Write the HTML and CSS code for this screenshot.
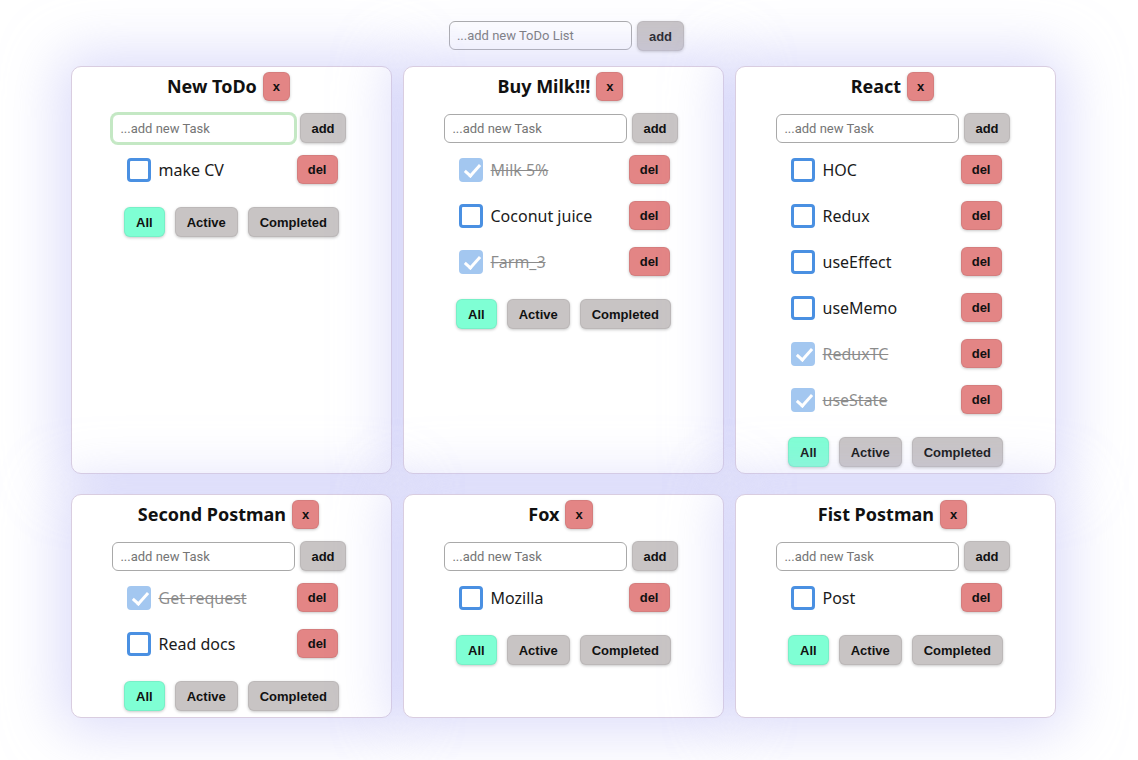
FILE: index.html
```html
<!DOCTYPE html>
<html lang="en">
<head>
<meta charset="utf-8">
<title>ToDo Lists</title>
<link rel="stylesheet" href="styles.css">
</head>
<body>
<div class="app">
  <div class="new-list">
    <input class="field" type="text" placeholder="...add new ToDo List">
    <button class="btn gray">add</button>
  </div>
  <div class="grid">
    <div class="card">
      <div class="title"><h3>New ToDo</h3><button class="btn red">x</button></div>
      <div class="add-row"><input class="field focused" type="text" placeholder="...add new Task"><button class="btn gray">add</button></div>
      <ul class="tasks">
        <li><label class="task"><span class="cb"></span><span class="name">make CV</span></label><button class="btn red">del</button></li>
      </ul>
      <div class="filters"><button class="btn all">All</button><button class="btn gray">Active</button><button class="btn gray">Completed</button></div>
    </div>
    <div class="card">
      <div class="title"><h3>Buy Milk!!!</h3><button class="btn red">x</button></div>
      <div class="add-row"><input class="field" type="text" placeholder="...add new Task"><button class="btn gray">add</button></div>
      <ul class="tasks">
        <li class="done"><label class="task"><span class="cb"></span><span class="name">Milk 5%</span></label><button class="btn red">del</button></li>
        <li><label class="task"><span class="cb"></span><span class="name">Coconut juice</span></label><button class="btn red">del</button></li>
        <li class="done"><label class="task"><span class="cb"></span><span class="name">Farm_3</span></label><button class="btn red">del</button></li>
      </ul>
      <div class="filters"><button class="btn all">All</button><button class="btn gray">Active</button><button class="btn gray">Completed</button></div>
    </div>
    <div class="card">
      <div class="title"><h3>React</h3><button class="btn red">x</button></div>
      <div class="add-row"><input class="field" type="text" placeholder="...add new Task"><button class="btn gray">add</button></div>
      <ul class="tasks">
        <li><label class="task"><span class="cb"></span><span class="name">HOC</span></label><button class="btn red">del</button></li>
        <li><label class="task"><span class="cb"></span><span class="name">Redux</span></label><button class="btn red">del</button></li>
        <li><label class="task"><span class="cb"></span><span class="name">useEffect</span></label><button class="btn red">del</button></li>
        <li><label class="task"><span class="cb"></span><span class="name">useMemo</span></label><button class="btn red">del</button></li>
        <li class="done"><label class="task"><span class="cb"></span><span class="name">ReduxTC</span></label><button class="btn red">del</button></li>
        <li class="done"><label class="task"><span class="cb"></span><span class="name">useState</span></label><button class="btn red">del</button></li>
      </ul>
      <div class="filters"><button class="btn all">All</button><button class="btn gray">Active</button><button class="btn gray">Completed</button></div>
    </div>
    <div class="card">
      <div class="title"><h3>Second Postman</h3><button class="btn red">x</button></div>
      <div class="add-row"><input class="field" type="text" placeholder="...add new Task"><button class="btn gray">add</button></div>
      <ul class="tasks">
        <li class="done"><label class="task"><span class="cb"></span><span class="name">Get request</span></label><button class="btn red">del</button></li>
        <li><label class="task"><span class="cb"></span><span class="name">Read docs</span></label><button class="btn red">del</button></li>
      </ul>
      <div class="filters"><button class="btn all">All</button><button class="btn gray">Active</button><button class="btn gray">Completed</button></div>
    </div>
    <div class="card">
      <div class="title"><h3>Fox</h3><button class="btn red">x</button></div>
      <div class="add-row"><input class="field" type="text" placeholder="...add new Task"><button class="btn gray">add</button></div>
      <ul class="tasks">
        <li><label class="task"><span class="cb"></span><span class="name">Mozilla</span></label><button class="btn red">del</button></li>
      </ul>
      <div class="filters"><button class="btn all">All</button><button class="btn gray">Active</button><button class="btn gray">Completed</button></div>
    </div>
    <div class="card">
      <div class="title"><h3>Fist Postman</h3><button class="btn red">x</button></div>
      <div class="add-row"><input class="field" type="text" placeholder="...add new Task"><button class="btn gray">add</button></div>
      <ul class="tasks">
        <li><label class="task"><span class="cb"></span><span class="name">Post</span></label><button class="btn red">del</button></li>
      </ul>
      <div class="filters"><button class="btn all">All</button><button class="btn gray">Active</button><button class="btn gray">Completed</button></div>
    </div>
  </div>
</div>
</body>
</html>
```
FILE: styles.css
```css
* { box-sizing: border-box; }

html {
  background: #ffffff;
  min-height: 100vh;
}

body {
  margin: 0;
  padding: 8px;
  min-height: 100vh;
  font-family: "Noto Sans", "Open Sans", sans-serif;
  color: #111;
}

.app {
  padding-top: 13px;
}

.new-list {
  display: flex;
  justify-content: center;
  gap: 5px;
  margin-left: -5px;
}

.field {
  width: 183px;
  height: 29px;
  border: 1px solid #a9a9a9;
  border-radius: 6px;
  padding: 0 7px;
  font-family: Roboto, "Liberation Sans", sans-serif;
  font-size: 13px;
  color: #222;
  background: #fff;
  outline: none;
}

.field::placeholder {
  color: #757575;
}

.field.focused {
  box-shadow: 0 0 0 2px #c4e8c4;
  border-color: #c4e8c4;
}

.btn {
  height: 30px;
  padding: 0 11px;
  border: 1px solid rgba(0, 0, 0, 0.06);
  border-radius: 6px;
  font-family: "Liberation Sans", Arial, sans-serif;
  font-weight: bold;
  font-size: 13px;
  color: #111;
  box-shadow: 0 1px 3px rgba(0, 0, 0, 0.22);
  cursor: pointer;
}

.gray { background: #c8c4c4; }
.red { background: #e38585; }
.all { background: #7fffd4; }

.grid {
  margin-top: 15px;
  margin-left: 63px;
  display: grid;
  grid-template-columns: repeat(3, 321px);
  column-gap: 11px;
  row-gap: 20px;
}

.card {
  background: #fff;
  border: 1px solid #d9cde0;
  border-radius: 10px;
  padding: 5px 10px 6px;
  box-shadow: 0 0 55px 12px rgba(196, 196, 246, 0.6);
}

.title {
  display: flex;
  justify-content: center;
  align-items: center;
  gap: 6px;
  margin-left: -6px;
}

.title h3 {
  margin: 0;
  font-size: 18px;
  font-weight: bold;
  line-height: 29px;
}

.title .btn {
  height: 29px;
  padding: 0 9px;
}

.add-row {
  display: flex;
  justify-content: center;
  align-items: center;
  gap: 5px;
  margin-top: 12px;
  margin-left: -5px;
}

.add-row .btn {
  padding: 0 10px;
}

.tasks {
  list-style: none;
  margin: 12px auto 0;
  padding: 0;
  width: 212px;
  display: flex;
  flex-direction: column;
}

.tasks li {
  display: flex;
  justify-content: space-between;
  align-items: center;
  height: 29px;
  margin-bottom: 17px;
  padding-left: 1px;
}

.tasks li .btn {
  height: 29px;
  padding: 0 10px;
}

.task {
  display: flex;
  align-items: center;
  gap: 8px;
  font-size: 16px;
  color: #1a1a1a;
  margin-top: 1px;
}

.cb {
  position: relative;
  width: 24px;
  height: 24px;
  border: 3px solid #4a90e2;
  border-radius: 4px;
  background: #fff;
}

.done .cb {
  background: #4a90e2;
  opacity: 0.5;
}

.done .cb::after {
  content: "";
  position: absolute;
  left: 6px;
  top: 0px;
  width: 6px;
  height: 13px;
  border-right: 3.5px solid #fff;
  border-bottom: 3.5px solid #fff;
  transform: rotate(42deg);
}

.done .name {
  text-decoration: line-through;
  opacity: 0.5;
}

.filters {
  display: flex;
  justify-content: center;
  gap: 10px;
  margin-top: 6px;
}
```
